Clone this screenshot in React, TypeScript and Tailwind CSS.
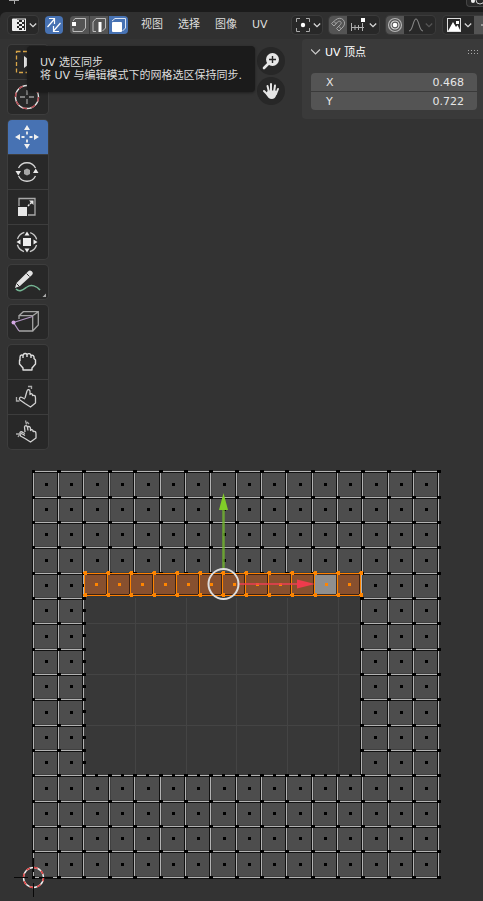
import { useState } from "react";
import type { ReactNode } from "react";

const COLS = 16;
const X0 = 33;
const Y0 = 471.2;
const STEP = 25.34;
const gx = (i: number) => Math.round(X0 + i * STEP - 0.2);
const gy = (i: number) => Math.round(Y0 + i * STEP);
const STRIP_LEFT = 85;
const STRIP_STEP = 23;
const sx = (i: number) => STRIP_LEFT + i * STRIP_STEP;
const range = (n: number) => Array.from({ length: n }, (_, i) => i);
const inHole = (c: number, r: number) => c >= 2 && c < 13 && r >= 4 && r < 12;

function Chevron({ dim = false }: { dim?: boolean }) {
  return (
    <svg width="8" height="18" viewBox="0 0 8 18" fill="none" stroke={dim ? "#555" : "#d8d8d8"} strokeWidth="1.3" className="shrink-0">
      <path d="M.8 7.500l3.200 3.200 3.200-3.200" />
    </svg>
  );
}

function Icon({ children, size = 18 }: { children: ReactNode; size?: number }) {
  return (
    <svg width={size} height={size} viewBox={`0 0 ${size} ${size}`} fill="none" className="shrink-0 overflow-visible" aria-hidden="true">
      {children}
    </svg>
  );
}

function ToolButton({ label, active = false, children }: { label: string; active?: boolean; children: ReactNode }) {
  return (
    <button
      aria-label={label}
      className={`flex h-[34px] w-full items-center justify-center ${active ? "bg-[#4772b3]" : "bg-[#282828]"}`}
    >
      <Icon size={26}>{children}</Icon>
    </button>
  );
}

function ToolGroup({ children }: { children: ReactNode }) {
  return (
    <div className="flex flex-col gap-px overflow-hidden rounded bg-[#3d3d3d] shadow-[0_0_0_1px_#3d3d3d]">{children}</div>
  );
}

function Toolbar() {
  return (
    <div className="ml-2 mt-1.5 flex w-10 shrink-0 flex-col gap-1.5">
      <ToolGroup>
        <ToolButton label="框选">
          <rect x="1.5" y="2.5" width="22" height="21" stroke="#d9a648" strokeWidth="1.3" strokeDasharray="4 2.5" />
          <path d="M9 7v12l8-6z" fill="#e6e6e6" />
        </ToolButton>
        <ToolButton label="游标">
          <circle cx="12" cy="13" r="11.500" stroke="#e6e6e6" strokeWidth="1.4" />
          <circle cx="12" cy="13" r="11.500" stroke="#b3474f" strokeWidth="1.4" strokeDasharray="4.500 4.500" />
          <path d="M12 6v5M12 15v5M5 13h5M14 13h5" stroke="#9a9a9a" strokeWidth="1.3" />
        </ToolButton>
      </ToolGroup>
      <ToolGroup>
        <ToolButton label="移动" active>
          <path d="M12 1l3 5H9zM12 25l3-5H9zM0 13l5-3v6zM24 13l-5-3v6z" fill="#f0f0f0" />
          <path d="M12 7.500v3M12 15.500v3M6.500 13h3M14.500 13h3" stroke="#f0f0f0" strokeWidth="1.800" />
        </ToolButton>
        <ToolButton label="旋转">
          <path d="M3.500 9a9.500 9.500 0 0 1 17 0M20.500 17a9.500 9.500 0 0 1-17 0" stroke="#d6d6d6" strokeWidth="1.3" />
          <path d="M.5 12h5.500l-2.700 4.500zM18 14h5.500L20.700 9.500z" fill="#e8e8e8" />
          <path d="M12 9.500l3 1.500v4l-3 1.500L9 15v-4z" fill="#a6a6a6" />
        </ToolButton>
        <ToolButton label="缩放">
          <path d="M4 12V4.500h16v16.500H13" stroke="#a9a9a9" strokeWidth="1.300" />
          <rect x="3" y="13" width="9" height="9" fill="#e8e8e8" />
          <path d="M13 12l4-4" stroke="#e8e8e8" strokeWidth="1.500" strokeDasharray="2 1" />
          <path d="M14 6.500h4.500V11z" fill="#e8e8e8" />
        </ToolButton>
        <ToolButton label="变换">
          <circle cx="12" cy="13" r="10" stroke="#c9c9c9" strokeWidth="1.300" strokeDasharray="9.700 6" strokeDashoffset="-3" />
          <rect x="8" y="9" width="8" height="8" fill="#eee" />
          <path d="M12 2.500l2.500 4h-5zM12 23.500l2.500-4h-5zM1.500 13l4-2.500v5zM22.500 13l-4-2.500v5z" fill="#eee" />
        </ToolButton>
      </ToolGroup>
      <ToolGroup>
        <ToolButton label="标注">
          <path d="M1 20c4 4 8 0 11-2 4-3 10-1 13 3" stroke="#74b593" strokeWidth="1.500" />
          <path d="M0 19l1.500-5L13 2.500a2.300 2.300 0 0 1 4 3.500L5 17z" fill="#e2e2e2" />
          <path d="M11.500 4.500l3 3M1.500 14.500l3 3" stroke="#333" />
          <path d="M31 28v-3.500L27.500 28z" fill="#aaa" />
        </ToolButton>
      </ToolGroup>
      <ToolGroup>
        <ToolButton label="撕裂">
          <path d="M4 10V6.700h13.700V22H4M4 6.700l4.300-4h15v13.300l-5.600 6M17.700 6.700l5.600-4" stroke="#a5a5a5" strokeWidth="1.300" />
          <path d="M-1.500 13.500L17.500 7.500M-1.500 13.500L4 22" stroke="#b397c4" strokeWidth="1.300" />
          <circle cx="-1.500" cy="13.500" r="2" fill="#d5a9e6" />
        </ToolButton>
      </ToolGroup>
      <ToolGroup>
        <ToolButton label="抓取">
          <path d="M5 10V8.500C5 6 7 5.500 8 6.500 8.500 4 11 4 12 5.500c1.500-1.500 3.500-1 4 1 2-1 3.500.5 3 3l1.500 1.500v4L17 19v2H8v-2l-3.500-4v-3.500zM5 12V9M8 7v2M12 6v2M16 7v2" stroke="#dedede" strokeWidth="1.400" strokeLinejoin="round" />
        </ToolButton>
        <ToolButton label="松弛">
          <path d="M10 14l2-7c.5-2 3-1.500 3 .5v3c1-1.500 3-.5 2.500 1 2-.5 3 0 3 2.500v5L15.500 23 10 19.500 5 16c-1.500-1.500 0-3.500 2-2.500l3 1.500" stroke="#d0d0d0" strokeWidth="1.300" strokeLinejoin="round" />
          <path d="M13 2.500h3.500V5M1.500 13v4h3" stroke="#aaa" strokeWidth="1.300" />
        </ToolButton>
        <ToolButton label="捏挤">
          <path d="M10 13l-.5-5c.5-2 3-1.500 3 .5 1-2 3-.5 3 1v2c1-1.500 3-.5 2.500 1 2-.5 3 0 3 2.500v4L15.500 23 10 19.500 5.500 17c-1-2 .5-3 2-2l2.500 1.500M5 15c-.5-2 1-3 3-1.500l2 1M12.500 8.500l.5 3" stroke="#d0d0d0" strokeWidth="1.300" strokeLinejoin="round" />
          <path d="M10.500 1.500l1 4M12 3l2 2M1 15h4l-2 3" stroke="#aaa" strokeWidth="1.300" />
        </ToolButton>
      </ToolGroup>
    </div>
  );
}

const dropButton = "flex h-[18px] shrink-0 items-center overflow-hidden rounded bg-[#282828] shadow-[0_0_0_1px_#3b3b3b]";

function Header() {
  return (
    <header className="flex h-[27px] items-start gap-[7px] overflow-hidden rounded-tl-md bg-[#303030] pl-2 pt-1">
      <button aria-label="编辑器类型" className={`${dropButton} w-[30px] pl-[3px]`}>
        <Icon>
          <rect x="1" y="2.500" width="4.500" height="12.500" rx="1" fill="#eee" />
          <rect x="5.500" y="3" width="9" height="11.500" stroke="#eee" />
          <path d="M6 4h2v2H6zM11 4h2v2h-2zM8 6h3v2H8zM6 8h2v2H6zM11 8h2v2h-2zM8 10h3v2H8zM6 12h2v2H6zM11 12h2v2h-2z" fill="#eee" />
        </Icon>
        <Chevron />
      </button>
      <button aria-label="UV 选区同步" aria-pressed="true" className="h-[18px] w-[18px] shrink-0 rounded bg-[#4772b3]">
        <Icon>
          <path d="M2.500 11L9.500 3M4 2.500h5.500V8M15.500 7L8.500 15M8.500 10v5.500H14" stroke="#fff" strokeWidth="1.200" />
        </Icon>
      </button>
      <div className="flex h-[18px] shrink-0 gap-px overflow-hidden rounded bg-[#3a3a3a]">
        <button aria-label="顶点选择" className="w-[19px] bg-[#545454]">
          <Icon>
            <path d="M3 5l2-2.500h10.500V12l-3 3.500H3V12" stroke="#bbb" />
            <rect x="2" y="6" width="4" height="4" fill="#fff" />
          </Icon>
        </button>
        <button aria-label="边选择" className="w-[18px] bg-[#545454]">
          <Icon>
            <path d="M6 15.500H3V6l3-3.500h9.500V12l-3 3" stroke="#bbb" />
            <rect x="8.500" y="6" width="3" height="10" fill="#fff" />
          </Icon>
        </button>
        <button aria-label="面选择" aria-pressed="true" className="w-[19px] bg-[#4772b3]">
          <Icon>
            <path d="M3 5l3-2.500h10.500V12l-3 3" stroke="#dbe4f2" />
            <rect x="3" y="6" width="10" height="10" rx="1" fill="#fff" />
          </Icon>
        </button>
      </div>
      <nav className="ml-1.5 mr-[17px] flex h-[18px] shrink-0 items-center gap-[15px]">
        {["视图", "选择", "图像", "UV"].map((name) => (
          <button key={name} className="leading-[18px] text-[#dedede]">{name}</button>
        ))}
      </nav>
      <button aria-label="轴心点" className={`${dropButton} w-[30px] pl-[3px]`}>
        <Icon>
          <path d="M1.500 6V2.500H5M11 2.500h3.500V6M14.500 12v3.500H11M5 15.500H1.500V12" stroke="#aaa" />
          <circle cx="8" cy="9" r="2.200" fill="#fff" />
        </Icon>
        <Chevron />
      </button>
      <div className={`${dropButton} w-[50px]`}>
        <button aria-label="吸附" className="w-[18px] bg-[#545454]">
          <Icon>
            <path d="M2.500 7.500l4-3.500c6-5 12 2 7.500 7l-4 4-2.500-2.500 4-4c2-2.500-1-4.500-3-2.500l-3.500 4zM5 5.500L7.500 8M10 10.500l2.500 2.500" stroke="#a5a5a5" />
          </Icon>
        </button>
        <button aria-label="吸附目标" className="flex w-8 items-center gap-px pl-[3px]">
          <Icon>
            <path d="M1.500 7v8M1 11.500h13M5 9v5M8.500 9v5M12.500 7v8" stroke="#b0b0b0" />
            <rect x="11" y="2" width="4" height="4" fill="#fff" />
          </Icon>
          <Chevron />
        </button>
      </div>
      <div className={`${dropButton} w-[49px]`}>
        <button aria-label="衰减编辑" className="w-[18px] bg-[#545454]">
          <Icon>
            <circle cx="9" cy="9" r="6.500" stroke="#b5b5b5" strokeWidth="1.200" />
            <circle cx="9" cy="9" r="4" stroke="#ddd" strokeWidth="1.200" />
            <circle cx="9" cy="9" r="2.300" fill="#fff" />
          </Icon>
        </button>
        <button aria-label="衰减类型" className="flex w-8 items-center pl-[3px]">
          <Icon>
            <path d="M2 15c4 0 4-12 7-12s3 12 7 12" stroke="#858585" strokeWidth="1.100" />
          </Icon>
          <Chevron dim />
        </button>
      </div>
      <div className={`${dropButton} ml-px w-[60px]`}>
        <button aria-label="浏览图像" className="flex w-[31px] items-center pl-[3px]">
          <Icon>
            <rect x="1.500" y="2.500" width="13" height="13" stroke="#ddd" />
            <path d="M2 15l5-9 3 5 1.500-2 3 6z" fill="#fff" />
            <rect x="10" y="5" width="3" height="3" fill="#fff" />
          </Icon>
          <Chevron />
        </button>
        <button aria-label="新建图像" className="h-[18px] w-[29px] bg-[#545454]">
          <Icon><path d="M7 9h8M11 5v8" stroke="#ddd" /></Icon>
        </button>
      </div>
    </header>
  );
}

function Field({ name, value, onChange }: { name: string; value: string; onChange: (v: string) => void }) {
  return (
    <label className="flex h-[18px] items-center bg-[#545454] pl-[15px] pr-[13px]">
      <span className="w-10">{name}</span>
      <input
        value={value}
        onChange={(e) => onChange(e.target.value)}
        className="h-[18px] w-0 flex-1 bg-transparent text-right text-[#e6e6e6] outline-none"
      />
    </label>
  );
}

function VertexPanel() {
  const [x, setX] = useState("0.468");
  const [y, setY] = useState("0.722");
  return (
    <section className="h-20 w-[181px] shrink-0 rounded-l bg-[#3a3a3a] pl-[9px] pr-1.5 text-[#e6e6e6]">
      <button className="flex h-[26px] w-full items-center gap-1">
        <svg width="10" height="8" viewBox="0 0 10 8" fill="none" stroke="#ccc" strokeWidth="1.200" className="shrink-0">
          <path d="M0 1.500l4.500 4.500L9 1.500" />
        </svg>
        <span className="flex-1 text-left text-white">UV 顶点</span>
        <svg width="11" height="6" viewBox="0 0 11 6" fill="#aaa" className="-mr-0.5 shrink-0">
          {range(4).map((i) => (
            <path key={i} d={`M${i * 3} 1h1v1h-1zM${i * 3} 4h1v1h-1z`} />
          ))}
        </svg>
      </button>
      <div className="mt-2 flex flex-col gap-px overflow-hidden rounded">
        <Field name="X" value={x} onChange={setX} />
        <Field name="Y" value={y} onChange={setY} />
      </div>
    </section>
  );
}

function ViewControls() {
  const round = "flex h-7 w-7 items-center justify-center rounded-full bg-[#272727]";
  return (
    <div className="mr-[17px] mt-2 flex shrink-0 flex-col gap-0.5">
      <button aria-label="缩放视图" className={round}>
        <Icon>
          <path d="M7 11l-5 5" stroke="#e6e6e6" strokeWidth="2.600" strokeLinecap="round" />
          <circle cx="10.500" cy="7.500" r="6.500" fill="#e6e6e6" />
          <path d="M7 7.500h7M10.500 4v7" stroke="#272727" strokeWidth="1.400" />
        </Icon>
      </button>
      <button aria-label="平移视图" className={round}>
        <Icon>
          <path d="M2 9l4 4M5.500 4l1.500 6M9 2v8M13 3.500L12 10M16 7l-2 5" stroke="#e6e6e6" strokeWidth="2" strokeLinecap="round" />
          <path d="M5.800 8.500h8l1 2.500c-.5 3-2 6-4.800 6-3 0-4.500-2-6-5z" fill="#e6e6e6" />
        </Icon>
      </button>
    </div>
  );
}

function UvCanvas() {
  const cells = range(COLS).flatMap((r) => range(COLS).map((c) => ({ r, c })));
  const nodes = range(COLS + 1).flatMap((r) => range(COLS + 1).map((c) => ({ r, c })));
  const left = (c: number, r: number) => gx(c) - (c === 13 && r >= 4 && r < 12 ? 1 : 0);
  const solid = cells
    .filter(({ r, c }) => !inHole(c, r))
    .map(({ r, c }) => {
      const x = left(c, r);
      const y = gy(r);
      return { key: `${r}-${c}`, x, y, w: gx(c + 1) - x, h: gy(r + 1) - y };
    });
  return (
    <svg width="460" height="441" viewBox="0 460 460 441" fill="none" shapeRendering="crispEdges" className="mt-[11px] block shrink-0" role="img" aria-label="UV 网格">
      <rect x="33" y="471" width="405" height="407" fill="#383838" />
      <path d="M135.500 598v178M186.500 598v178M236.500 598v178M287.500 598v178M338.500 598v178M86 623.500h276M86 674.500h276M86 725.500h276" stroke="#444444" />
      {solid.map(({ key, x, y, w, h }) => (
        <g key={key}>
          <rect x={x} y={y} width={w} height={h} fill="#4d4d4d" />
          <path d={`M${x + 1.5} ${y}v${h}M${x} ${y + h - 0.5}h${w}`} stroke="#404040" />
        </g>
      ))}
      {solid.map(({ key, x, y, w, h }) => (
        <g key={key}>
          <path d={`M${x - 0.5} ${y}v${h}M${x + w - 0.5} ${y}v${h}M${x} ${y + 1.5}h${w}M${x} ${y + h + 1.5}h${w}`} stroke="#111" />
          <path d={`M${x + 0.5} ${y}v${h}M${x + w + 0.5} ${y}v${h}M${x} ${y + 0.5}h${w}M${x} ${y + h + 0.5}h${w}`} stroke="#b3b3b3" />
        </g>
      ))}
      {solid.map(({ key, x, y, w, h }) => (
        <rect key={key} x={Math.floor(x + w / 2)} y={Math.floor(y + h / 2) - 1} width="3" height="3" fill="#000" />
      ))}
      {range(8).map((i) => (
        <rect key={i} x={gx(2)} y={gy(i + 4) + 11} width="3" height="3" fill="#000" />
      ))}
      {range(11).map((i) => (
        <rect key={i} x={gx(i + 2) + 12} y={gy(12) - 1} width="3" height="3" fill="#000" />
      ))}
      {nodes
        .filter(({ r, c }) => !(c > 2 && c < 13 && r > 4 && r < 12))
        .map(({ r, c }) => (
          <rect key={`${r}-${c}`} x={left(c, r) - 1} y={gy(r) - 1} width={c === 0 ? 3 : 4} height="3" fill="#000" />
        ))}
      {range(12).map((i) => (
        <g key={i}>
          <rect x={sx(i)} y="573" width={STRIP_STEP} height="23" fill={i === 10 ? "#8f8f8f" : "#87502f"} />
          <path d={`M${sx(i)} 574.5h${STRIP_STEP}M${sx(i + 1) - 1.5} 574v21M${sx(i)} 594.5h${STRIP_STEP}`} stroke="#2b160c" strokeOpacity="0.8" />
        </g>
      ))}
      <path d={`M84 573.500H${sx(12)}M84 595.500H${sx(12)}`} stroke="#ff8000" />
      {range(13).map((i) => (
        <g key={i} fill="#ff8500">
          <rect x={sx(i) - 1} y="573" width="1" height="23" />
          <rect x={sx(i) - 1} y="571" width="3" height="4" />
          <rect x={sx(i) - 2} y="572" width="4" height="2" />
          <rect x={sx(i) - 1} y="593" width="3" height="4" />
          <rect x={sx(i) - 2} y="594" width="4" height="2" />
        </g>
      ))}
      {range(12).map((i) => (
        <rect key={i} x={sx(i) + 10} y="583" width="3" height="3" fill="#ff8500" />
      ))}
      <g shapeRendering="auto">
        <path d="M223.500 569V509" stroke="#73b82e" strokeOpacity="0.8" strokeWidth="2.500" />
        <path d="M223.500 493l4.500 17h-9z" fill="#80cc28" />
        <path d="M239 584h60" stroke="#e83e50" strokeOpacity="0.8" strokeWidth="2" />
        <path d="M315 584l-18 4.500v-9z" fill="#ef3b4c" />
        <circle cx="223.500" cy="584" r="15" stroke="#dddddd" strokeWidth="2" />
        <circle cx="33.500" cy="877.500" r="10" stroke="#f0f0f0" strokeWidth="1.400" />
        <circle cx="33.500" cy="877.500" r="10" stroke="#e13c3c" strokeWidth="1.400" strokeDasharray="3.930 3.930" />
        <path d="M14 877.500h14M39 877.500h14M33.500 858v14M33.500 883v14" stroke="#080808" />
      </g>
    </svg>
  );
}

export default function App() {
  return (
    <div className="relative flex min-h-screen w-full flex-col overflow-hidden bg-[#333333] font-['DejaVu_Sans','Noto_Sans_CJK_SC',sans-serif] text-[11px] leading-[13px]">
      <div className="bg-[#1b1b1b]">
        <div className="flex h-3 items-start justify-between overflow-hidden">
          <button aria-label="添加工作区" className="ml-[9px]">
            <svg width="10" height="5" viewBox="0 0 10 5" stroke="#aaa"><path d="M0 .5h10M5.500 0v4" /></svg>
          </button>
          <button aria-label="场景" className="h-[7px] w-[17px] overflow-hidden rounded-bl border-b border-l border-[#444] bg-[#282828]">
            <svg width="16" height="6" viewBox="0 0 16 6" fill="none">
              <circle cx="6" cy="1" r="2" fill="#eee" />
              <circle cx="13" cy="0" r="4" stroke="#ccc" />
            </svg>
          </button>
        </div>
        <Header />
      </div>
      <main className="flex flex-1 flex-col">
        <div className="flex items-start">
          <Toolbar />
          <div className="flex-1" />
          <ViewControls />
          <VertexPanel />
        </div>
        <UvCanvas />
      </main>
      <div role="tooltip" className="absolute left-[27px] top-[46px] h-[46px] w-[228px] whitespace-nowrap rounded bg-[#1b1b1b] pl-[13px] pt-2.5 text-[#dddddd] shadow-[0_1px_3px_#00000066]">
        <p>UV 选区同步</p>
        <p>将 UV 与编辑模式下的网格选区保持同步.</p>
      </div>
    </div>
  );
}
